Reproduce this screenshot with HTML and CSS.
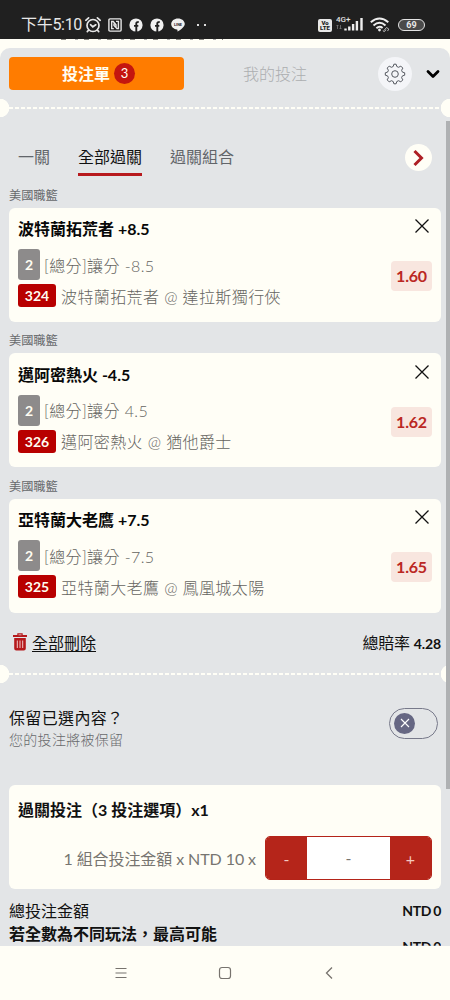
FILE: index.html
```html
<!DOCTYPE html>
<html lang="zh-Hant">
<head>
<meta charset="utf-8">
<title>投注單</title>
<link rel="stylesheet" href="styles.css">
</head>
<body>
<div class="phone">
  <header class="status">
    <span class="clock">下午5:10</span>
    <svg class="ic-alarm" width="18" height="18" viewBox="0 0 18 18" fill="none" stroke="#e8e8e8" stroke-width="1.7" stroke-linecap="round"><circle cx="9" cy="9.5" r="6"/><path d="M1.8 4.3 4.6 1.8M16.2 4.3 13.4 1.8M6.5 8.7 8.8 10.8 11.8 8.8M4.5 14.2 3.3 15.6M13.5 14.2l1.2 1.4"/></svg>
    <svg class="ic-nfc" width="14" height="14" viewBox="0 0 14 14" fill="none" stroke="#e8e8e8" stroke-width="1.4"><rect x=".9" y=".9" width="12.2" height="12.2" rx="1"/><path d="M5.800 10.600H3.700V3.500h1.500L8 6.800v2.800M8 3.400h2.400v7.200H9L6 7.400V5.500"/></svg>
    <svg class="ic-fb" width="14" height="14" viewBox="0 0 14 14"><circle cx="7" cy="7" r="6.6" fill="#f0f0f0"/><path d="M7.3 14V5.3Q7.3 3.9 9.7 4M5 7.9h4.3" fill="none" stroke="#202020" stroke-width="1.9"/></svg>
    <svg class="ic-fb" width="14" height="14" viewBox="0 0 14 14"><circle cx="7" cy="7" r="6.6" fill="#f0f0f0"/><path d="M7.3 14V5.3Q7.3 3.9 9.7 4M5 7.9h4.3" fill="none" stroke="#202020" stroke-width="1.9"/></svg>
    <svg class="ic-line" width="14" height="14" viewBox="0 0 14 14"><path d="M7 .4C3.200.4.2 2.800.2 6c0 3 2.600 5.100 5.800 5.500.7.200.5 1 .4 2 .1.600 7.400-4.100 7.400-7.500C13.800 2.800 10.800.4 7 .4z" fill="#f0f0f0"/><text x="7" y="7.600" text-anchor="middle" class="line-text">LINE</text></svg>
    <span class="dots"><i></i><i></i></span>
    <span class="volte"><b>Vo</b><b>LTE</b></span>
    <svg class="ic-signal" width="28" height="17" viewBox="0 0 28 17"><text x="0" y="7" class="net">4G+</text><path d="M1.500 14V10M.5 11l1-1 1 1M4.500 10v4M3.500 13l1 1 1-1" stroke="#777" stroke-width=".8" fill="none"/><path d="M9.500 13.500V15.500M13.300 11.500V15.500M17.100 9V15.500M20.900 6V15.500M25.500 3V15.500" stroke="#eee" stroke-width="2.400"/></svg>
    <svg class="ic-wifi" width="21" height="16" viewBox="0 0 21 16" fill="none" stroke="#eee" stroke-width="2"><path d="M.8 5.300Q9.500-2.200 18.300 5.300M3.500 8.400q6-5.200 12 0M6.400 11.200q3.200-2.700 6.200-.2"/><circle cx="9.500" cy="13" r="1.400" fill="#eee" stroke="none"/><path d="m14 13.500 2.500-3 2.300 1.600-1.300 2M16 12.600l-1.500 2-1.700-.8" stroke-width="1" stroke="#bbb"/></svg>
    <span class="battery">69</span>
  </header>
  <div class="behind"><i></i></div>

  <main class="panel">
    <div class="modes">
      <button class="mode-on">投注單<span class="count">3</span></button>
      <span class="mode-off">我的投注</span>
      <span class="gear"><svg width="22" height="22" viewBox="0 0 22 22" fill="none" stroke="#555960" stroke-width="1"><circle cx="11" cy="11" r="3.300"/><path d="M9.200 3.500 9.900 1.200h2.200l.7 2.300 1.800.8 2.200-1.200 2 2-1.200 2.200.8 1.800 2.300.7v2.400l-2.300.7-.8 1.800 1.200 2.200-2 2-2.200-1.200-1.800.8-.7 2.300H9.900l-.7-2.300-1.800-.8-2.200 1.200-2-2 1.200-2.200-.8-1.800-2.300-.7V9.800l2.300-.7.8-1.800-1.200-2.200 2-2 2.200 1.200z" stroke-linejoin="round"/></svg></span>
      <svg class="chev" width="16" height="12" viewBox="0 0 16 12" fill="none" stroke="#000" stroke-width="2.800" stroke-linecap="round" stroke-linejoin="round"><path d="m3 3.500 5 5 5-5"/></svg>
    </div>
    <div class="perf"></div>

    <nav class="tabs">
      <span>一關</span><span class="active">全部過關</span><span>過關組合</span>
      <i class="next"><svg width="14" height="18" viewBox="0 0 14 18" fill="none" stroke="#ae1f24" stroke-width="3"><path d="m2.500 2 7 7-7 7"/></svg></i>
    </nav>

    <section class="bet">
      <h3>美國職籃</h3>
      <div class="card">
        <div class="info">
          <strong>波特蘭拓荒者 +8.5</strong>
          <p><b class="tag grey">2</b>[總分]讓分 -8.5</p>
          <p class="match"><b class="tag red">324</b>波特蘭拓荒者 @ 達拉斯獨行俠</p>
        </div>
        <div class="side"><svg width="16" height="16" viewBox="0 0 16 16" stroke="#111" stroke-width="1.300"><path d="m1.500 1.500 13 13m0-13-13 13"/></svg><span class="odds">1.60</span></div>
      </div>
    </section>
    <section class="bet">
      <h3>美國職籃</h3>
      <div class="card">
        <div class="info">
          <strong>邁阿密熱火 -4.5</strong>
          <p><b class="tag grey">2</b>[總分]讓分 4.5</p>
          <p class="match"><b class="tag red">326</b>邁阿密熱火 @ 猶他爵士</p>
        </div>
        <div class="side"><svg width="16" height="16" viewBox="0 0 16 16" stroke="#111" stroke-width="1.300"><path d="m1.500 1.500 13 13m0-13-13 13"/></svg><span class="odds">1.62</span></div>
      </div>
    </section>
    <section class="bet">
      <h3>美國職籃</h3>
      <div class="card">
        <div class="info">
          <strong>亞特蘭大老鷹 +7.5</strong>
          <p><b class="tag grey">2</b>[總分]讓分 -7.5</p>
          <p class="match"><b class="tag red">325</b>亞特蘭大老鷹 @ 鳳凰城太陽</p>
        </div>
        <div class="side"><svg width="16" height="16" viewBox="0 0 16 16" stroke="#111" stroke-width="1.300"><path d="m1.500 1.500 13 13m0-13-13 13"/></svg><span class="odds">1.65</span></div>
      </div>
    </section>

    <div class="summary">
      <svg width="14" height="18" viewBox="0 0 14 18"><path d="M0 2h4.300V.3h5.400V2H14v2H0zM1.200 5h11.600v10.500q0 2-2 2H3.200q-2 0-2-2z" fill="#b5191c"/><path d="M5.500 1.500h3v.7h-3z" fill="#e3e5e7"/><path d="M4.300 7.500v7.500M7 7.500v7.500M9.700 7.500v7.500" stroke="#f0c8c8" stroke-width="1"/></svg>
      <u>全部刪除</u>
      <span class="total">總賠率 <b>4.28</b></span>
    </div>
    <div class="perf"></div>

    <div class="keep">
      <div><p class="keep-title">保留已選內容？</p><p class="keep-note">您的投注將被保留</p></div>
      <span class="toggle"><i><svg width="10" height="10" viewBox="0 0 10 10" stroke="#fff" stroke-width="1.100"><path d="m1 1 8 8m0-8-8 8"/></svg></i></span>
    </div>

    <section class="stake">
      <strong>過關投注（3 投注選項）x1</strong>
      <div class="stake-row">
        <span>1 組合投注金額 x NTD 10 x</span>
        <div class="stepper"><button>-</button><output>-</output><button>+</button></div>
      </div>
    </section>

    <div class="line-item"><span>總投注金額</span><b>NTD 0</b></div>
    <div class="line-item possible"><strong>若全數為不同玩法，最高可能</strong><b>NTD 0</b></div>
    <i class="scrollbar"></i>
  </main>

  <footer class="navbar">
    <svg width="14" height="14" viewBox="0 0 14 14" stroke="#77736e" stroke-width="1.200"><path d="M1.500 2.500h11M1.500 7h11M1.500 11.500h11"/></svg>
    <svg width="14" height="14" viewBox="0 0 14 14" fill="none" stroke="#77736e" stroke-width="1.200"><rect x="1.500" y="1.500" width="11" height="11" rx="2.500"/></svg>
    <svg width="14" height="14" viewBox="0 0 14 14" fill="none" stroke="#77736e" stroke-width="1.300"><path d="M10 1.500 4.500 7l5.500 5.500"/></svg>
  </footer>
</div>
</body>
</html>
```
FILE: styles.css
```css
* { box-sizing: border-box; margin: 0; padding: 0; }
body {
  font-family: Lato, "Noto Sans CJK TC", sans-serif;
  font-size: 16px;
  color: #111;
  background: #fffef6;
}
i { font-style: normal; }
svg { display: block; flex: none; }
button { border: 0; font: inherit; }
.phone { width: 450px; height: 1000px; overflow: hidden; display: flex; flex-direction: column; background: #fffef6; }

/* status bar */
.status { height: 39px; padding: 11px 25px 0 21px; display: flex; align-items: center; background: #202020; color: #e8e8e8; flex: none; white-space: nowrap; }
.clock { width: 61px; font: 400 16px/28px Roboto, "Noto Sans CJK TC", sans-serif; letter-spacing: -.3px; }
.ic-alarm { margin-left: 2px; }
.ic-nfc { margin-left: 6px; }
.ic-fb { margin-left: 7px; }
.ic-line { margin-left: 7px; }
.line-text { font: 700 3.8px Roboto, sans-serif; fill: #202020; }
.dots { display: flex; gap: 5px; margin-left: 12px; }
.dots i { width: 2px; height: 2px; background: #ddd; }
.volte { margin-left: auto; width: 14px; height: 13px; border-radius: 2px; background: #e8e8e8; color: #202020; display: grid; justify-items: center; align-content: center; }
.volte b { font: 900 6px/5.5px Roboto, sans-serif; }
.ic-signal { margin: -4px 0 0 4px; }
.net { font: 500 8px Roboto, sans-serif; fill: #e0e0e0; }
.ic-wifi { margin-left: 6px; }
.battery { margin-left: 7px; width: 27px; height: 12px; border: 1.5px solid #e4e4e4; border-radius: 6px; background: #4a4a4a; font: 700 9px/10px Roboto, sans-serif; text-align: center; }

.behind { height: 9px; flex: none; padding-left: 61px; }
.behind i { display: block; width: 162px; height: 1px; background: repeating-linear-gradient(90deg, #8a8984 0 5px, transparent 5px 14px, #aaa 14px 17px, transparent 17px 23px); }

/* bet slip */
.panel { position: relative; height: 898px; flex: none; overflow: hidden; padding: 9px 9px 0; border-radius: 10px 10px 0 0; background: #e3e5e7; }
.modes { height: 33px; display: flex; align-items: center; }
.mode-on { width: 175px; height: 33px; padding: 0 0 1px 4px; border-radius: 4px; display: flex; align-items: center; justify-content: center; gap: 4px; background: #ff7c00; color: #fffdf2; font-weight: 700; }
.count { width: 21px; height: 21px; border-radius: 50%; background: #c4160f; font-size: 13px; line-height: 20px; font-weight: 400; }
.mode-off { width: 182px; text-align: center; color: #acaeb0; font-weight: 300; line-height: 30px; }
.gear { width: 34px; height: 34px; margin-left: 12px; border-radius: 50%; background: #f4f5f8; display: grid; place-items: center; }
.chev { margin-left: 13px; }

.perf { height: 18px; margin: 9px -9px 0; background:
  radial-gradient(circle at 0 50%, #fffef6 9px, transparent 9.5px),
  radial-gradient(circle at 100% 50%, #fffef6 9px, transparent 9.5px),
  repeating-linear-gradient(90deg, #fffef6 0 4px, #e3e5e7 4px 6px) 9px 50% / 432px 2px no-repeat; }

.tabs { height: 60px; margin-top: 11px; padding: 0 9px 0 9px; display: flex; align-items: center; gap: 28px; color: #62656a; }
.tabs span { height: 37px; margin-top: -1px; line-height: 36px; border-bottom: 3px solid transparent; }
.tabs .active { color: #111; border-color: #b7191d; }
.next { width: 27px; height: 27px; margin: -1px 0 0 auto; border-radius: 50%; background: #fffef6; display: grid; place-items: center; }

.bet { height: 145.6px; }
.bet:first-of-type { margin-top: -2.5px; }
.bet h3 { height: 22px; font: 400 12.2px/20px Lato, "Noto Sans CJK TC", sans-serif; color: #66686b; }
.card { height: 114px; padding: 8.5px 9px; border-radius: 6px; background: #fffef6; display: flex; justify-content: space-between; }
.info strong { display: block; height: 33px; line-height: 25px; color: #080808; }
.info p { height: 31px; display: flex; align-items: center; color: #65645f; font-weight: 300; letter-spacing: .4px; }
.tag { border-radius: 3px; color: #fffdf2; font-size: 14px; font-weight: 700; letter-spacing: 0; text-align: center; flex: none; }
.grey { width: 22px; height: 31px; line-height: 31px; margin-right: 4px; background: #8d8b8b; }
.red { width: 38px; height: 23px; line-height: 23px; margin-right: 5px; background: #b80000; }
.side { display: flex; flex-direction: column; align-items: flex-end; padding-top: 2px; }
.side svg { margin-right: 2px; }
.odds { width: 41px; height: 30px; margin-top: 27px; border-radius: 4px; background: #f8e6df; color: #bb2823; font-weight: 700; line-height: 30px; text-align: center; letter-spacing: -.2px; }

.summary { height: 40px; padding-left: 4px; display: flex; align-items: center; }
.summary u { margin-left: 5px; text-underline-offset: 2px; text-decoration-thickness: 1px; }
.total { margin-left: auto; letter-spacing: -.2px; }
.total b { font-size: 14px; letter-spacing: -.1px; }
.summary + .perf { margin-top: 3px; }

.keep { height: 102px; padding-top: 22.5px; display: flex; justify-content: space-between; }
.keep-title { line-height: 24px; letter-spacing: .35px; }
.keep-note { font-size: 14px; line-height: 20px; font-weight: 300; color: #68696c; letter-spacing: .3px; }
.toggle { width: 49px; height: 31px; margin: 2px 3px 0 0; padding: 4px; border: 1px solid #77798a; border-radius: 16px; }
.toggle i { width: 21px; height: 21px; border-radius: 50%; background: #666783; display: grid; place-items: center; }

.stake { height: 104px; padding: 13px 9px 0; border-radius: 6px; background: #fffef6; }
.stake strong { display: block; height: 38px; line-height: 24px; }
.stake-row { display: flex; justify-content: flex-end; align-items: center; gap: 9px; color: #777570; letter-spacing: -.08px; }
.stepper { width: 167px; height: 44px; border: 1px solid #b42419; border-radius: 5px; overflow: hidden; display: grid; grid-template-columns: 41px 1fr 41px; background: #fff; }
.stepper button { background: #b5251a; color: #f4c9c0; }
.stepper output { line-height: 42px; text-align: center; }

.line-item { display: flex; justify-content: space-between; height: 23px; margin-top: 8.5px; line-height: 25px; }
.line-item b { font-size: 14px; letter-spacing: -.3px; word-spacing: -1px; }
.line-item.possible { margin-top: 0; }
.possible b { height: 10px; margin-top: 21px; line-height: 10px; align-self: flex-start; clip-path: inset(-2px 0 6px); }
.scrollbar { position: absolute; right: 0; top: 73px; width: 4px; height: 668px; background: #afb1b3; }

.navbar { height: 54px; display: flex; justify-content: center; align-items: center; gap: 90px; }
```
